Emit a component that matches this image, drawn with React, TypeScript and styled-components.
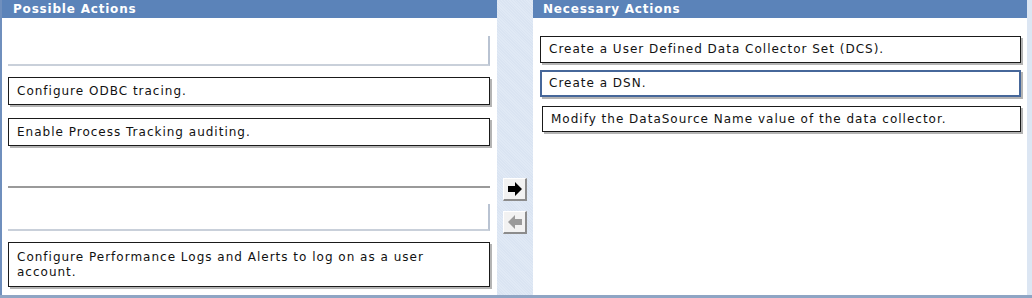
import React, { FC } from "react";
import styled, { createGlobalStyle } from "styled-components";

const GlobalStyle = createGlobalStyle`
  html, body {
    margin: 0;
    padding: 0;
    background: #dce6f3;
  }
  body {
    font-family: "DejaVu Sans", Verdana, sans-serif;
  }
`;

// LAYOUT

const Screen = styled.div`
  display: flex;
  width: 1032px;
  height: 298px;
  box-sizing: border-box;
  background: #dce6f3;
  border-bottom: 3px solid #8fa5c4;
`;

const Panel = styled.div<{ $width?: number }>`
  display: flex;
  flex-direction: column;
  box-sizing: border-box;
  width: ${(p) => (p.$width ? `${p.$width}px` : "auto")};
  flex: ${(p) => (p.$width ? "none" : "1")};
  background: #ffffff;
  border-left: ${(p) => (p.$width ? "2px solid #6f8fbd" : "none")};
  margin-right: ${(p) => (p.$width ? "0" : "5px")};
`;

const Header = styled.div<{ $indent: number }>`
  height: 18px;
  background: #5b83b9;
  color: #ffffff;
  font-weight: bold;
  font-size: 12px;
  letter-spacing: 0.8px;
  line-height: 18px;
  padding-left: ${(p) => p.$indent}px;
`;

const Body = styled.div<{ $left: number; $right: number }>`
  display: flex;
  flex-direction: column;
  flex: 1;
  padding: 0 ${(p) => p.$right}px 0 ${(p) => p.$left}px;
`;

const Middle = styled.div`
  width: 36px;
  display: flex;
  flex-direction: column;
  align-items: center;
  padding-top: 178px;
  gap: 10px;
  background: repeating-linear-gradient(
    45deg,
    #dae4f2 0px,
    #dae4f2 1px,
    #e0e9f5 1px,
    #e0e9f5 2px
  );
`;

// ITEMS

const Item = styled.div<{ $top: number; $height: number; $selected?: boolean; $inset?: number }>`
  margin-top: ${(p) => p.$top}px;
  margin-left: ${(p) => p.$inset ?? 0}px;
  min-height: ${(p) => p.$height}px;
  box-sizing: border-box;
  display: flex;
  align-items: center;
  padding: 0 ${(p) => (p.$selected ? 7 : 8)}px;
  font-size: 12px;
  letter-spacing: 1px;
  line-height: 15px;
  color: #111111;
  background: #ffffff;
  border: ${(p) => (p.$selected ? "2px solid #46679a" : "1px solid #1a1a1a")};
  box-shadow: 2px 2px 0 #b4b4b4;
`;

const Slot = styled.div<{ $top: number; $height: number; $kind: "corner" | "line" }>`
  margin-top: ${(p) => p.$top}px;
  height: ${(p) => p.$height}px;
  box-sizing: border-box;
  ${(p) =>
    p.$kind === "corner"
      ? `border-right: 2px solid #b9c3d2; border-bottom: 2px solid #c9d0da;`
      : `border-top: 2px solid #9a9a9a;`}
`;

// BUTTONS

const MoveButton = styled.div`
  width: 24px;
  height: 23px;
  box-sizing: border-box;
  display: flex;
  align-items: center;
  justify-content: center;
  background: #f2f2f2;
  border-top: 1px solid #ffffff;
  border-left: 1px solid #ffffff;
  border-right: 2px solid #8c8c8c;
  border-bottom: 2px solid #8c8c8c;
`;

const Arrow: FC<{ dir: "right" | "left"; color: string }> = ({ dir, color }) => (
  <svg width="16" height="16" viewBox="0 0 16 16">
    <polygon
      points="1,5 8,5 8,1 15,8 8,15 8,11 1,11"
      fill={color}
      transform={dir === "left" ? "translate(16,0) scale(-1,1)" : undefined}
    />
  </svg>
);

const App: FC = () => {
  return (
    <>
      <GlobalStyle />
      <Screen>
        <Panel $width={497}>
          <Header $indent={11}>Possible Actions</Header>
          <Body $left={6} $right={7}>
            <Slot $kind="corner" $top={18} $height={30} />
            <Item $top={11} $height={28}>Configure ODBC tracing.</Item>
            <Item $top={13} $height={28}>Enable Process Tracking auditing.</Item>
            <Slot $kind="line" $top={40} $height={18} />
            <Slot $kind="corner" $top={0} $height={27} />
            <Item $top={11} $height={45}>
              Configure Performance Logs and Alerts to log on as a user
              <br />
              account.
            </Item>
          </Body>
        </Panel>
        <Middle>
          <MoveButton>
            <Arrow dir="right" color="#000000" />
          </MoveButton>
          <MoveButton>
            <Arrow dir="left" color="#9a9a9a" />
          </MoveButton>
        </Middle>
        <Panel>
          <Header $indent={10}>Necessary Actions</Header>
          <Body $left={7} $right={6}>
            <Item $top={18} $height={27}>
              Create a User Defined Data Collector Set (DCS).
            </Item>
            <Item $top={7} $height={27} $selected>
              Create a DSN.
            </Item>
            <Item $top={9} $height={26} $inset={2}>
              Modify the DataSource Name value of the data collector.
            </Item>
          </Body>
        </Panel>
      </Screen>
    </>
  );
};

export default App;
